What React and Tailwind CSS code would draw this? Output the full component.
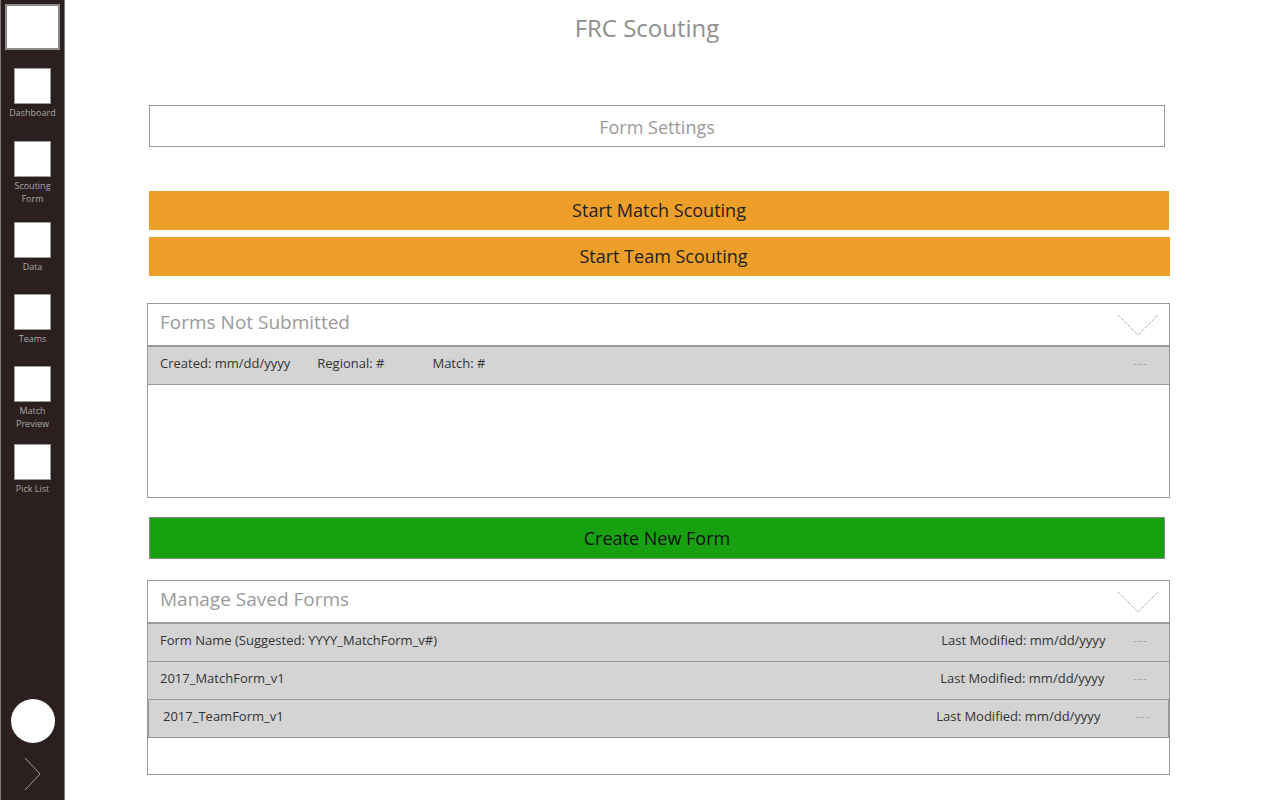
const font = { fontFamily: '"Open Sans", "Noto Sans", sans-serif' };

function NavItem({ lines, top }) {
  return (
    <div className={`flex flex-col items-center ${top}`}>
      <div className="h-[36px] w-[37px] border border-[#9a9a9a] bg-white" />
      <div className="mt-[2px] flex flex-col items-center text-[9px] leading-[13px] text-[#a8a8a8]">
        {lines.map((l) => (
          <span key={l}>{l}</span>
        ))}
      </div>
    </div>
  );
}

function Chevron() {
  return (
    <svg width="42" height="22" viewBox="0 0 42 22" className="shrink-0">
      <path d="M1 1 L21 21 L41 1" fill="none" stroke="#8f8f8f" strokeWidth="1" strokeDasharray="1 1" />
    </svg>
  );
}

function Panel({ title, children }) {
  return (
    <div className="flex h-[195px] w-[1023px] flex-col border border-[#999]">
      <div className="flex h-[41px] items-start justify-between pl-[12px] pr-[10px]">
        <span className="mt-[4px] text-[19px] text-[#9a9a9a]">{title}</span>
        <div className="mt-[10px]">
          <Chevron />
        </div>
      </div>
      <div className="border-t-2 border-[#999]">{children}</div>
    </div>
  );
}

function Row({ children, dashes = "pr-[21px]", className = "" }) {
  return (
    <div className={`flex h-[38px] items-center border-b border-[#999] bg-[#d4d4d4] pb-[4px] text-[13px] text-[#333] ${className}`}>
      <div className="flex flex-1 items-center">{children}</div>
      <span className={`text-[12px] tracking-[1px] text-[#a5a5a5] ${dashes}`}>---</span>
    </div>
  );
}

export default function App() {
  return (
    <div className="flex h-[800px] w-[1280px] bg-white" style={font}>
      <aside className="flex h-full w-[65px] shrink-0 flex-col items-center border-x border-[#7a7a7a] bg-[#2b201f]">
        <div className="mt-[4px] h-[46px] w-[55px] border-2 border-[#8a8a8a] bg-white" />
        <NavItem lines={["Dashboard"]} top="mt-[18px]" />
        <NavItem lines={["Scouting", "Form"]} top="mt-[22px]" />
        <NavItem lines={["Data"]} top="mt-[17px]" />
        <NavItem lines={["Teams"]} top="mt-[21px]" />
        <NavItem lines={["Match", "Preview"]} top="mt-[21px]" />
        <NavItem lines={["Pick List"]} top="mt-[14px]" />
        <div className="mt-auto h-[44px] w-[44px] rounded-full bg-white" />
        <svg width="18" height="34" viewBox="0 0 18 34" className="mb-[9px] mt-[14px] ml-[1px]">
          <path d="M1 1 L16 17 L1 33" fill="none" stroke="#9a9a9a" strokeWidth="1" />
        </svg>
      </aside>

      <main className="flex flex-1 flex-col pl-[82px]">
        <div className="flex h-[55px] w-[1000px] items-center justify-center text-[24px] text-[#8f8f8f]">
          FRC Scouting
        </div>

        <div className="ml-[2px] mt-[50px] flex h-[42px] w-[1016px] items-center justify-center border border-[#999] pt-[3px] text-[18px] text-[#9a9a9a]">
          Form Settings
        </div>

        <button className="ml-[2px] mt-[44px] h-[39px] w-[1020px] bg-[#ee9f29] text-[18px] text-[#222]">
          Start Match Scouting
        </button>
        <button className="ml-[2px] mt-[7px] h-[39px] w-[1021px] bg-[#ee9f29] pl-[8px] text-[18px] text-[#222]">
          Start Team Scouting
        </button>

        <div className="mt-[27px]">
          <Panel title="Forms Not Submitted">
            <Row>
              <span className="pl-[12px]">Created: mm/dd/yyyy</span>
              <span className="pl-[27px]">Regional: #</span>
              <span className="pl-[48px]">Match: #</span>
            </Row>
          </Panel>
        </div>

        <button className="ml-[2px] mt-[19px] h-[42px] w-[1016px] border border-[#888] bg-[#17a010] text-[18px] text-[#111]">
          Create New Form
        </button>

        <div className="mt-[21px]">
          <Panel title="Manage Saved Forms">
            <Row>
              <span className="pl-[12px]">Form Name (Suggested: YYYY_MatchForm_v#)</span>
              <span className="ml-auto pr-[28px]">Last Modified: mm/dd/yyyy</span>
            </Row>
            <Row>
              <span className="pl-[12px]">2017_MatchForm_v1</span>
              <span className="ml-auto pr-[29px]">Last Modified: mm/dd/yyyy</span>
            </Row>
            <Row className="-ml-px border-l-2 border-r border-[#999]" dashes="pr-[18px]">
              <span className="pl-[14px]">2017_TeamForm_v1</span>
              <span className="ml-auto pr-[35px]">Last Modified: mm/dd/yyyy</span>
            </Row>
          </Panel>
        </div>
      </main>
    </div>
  );
}
